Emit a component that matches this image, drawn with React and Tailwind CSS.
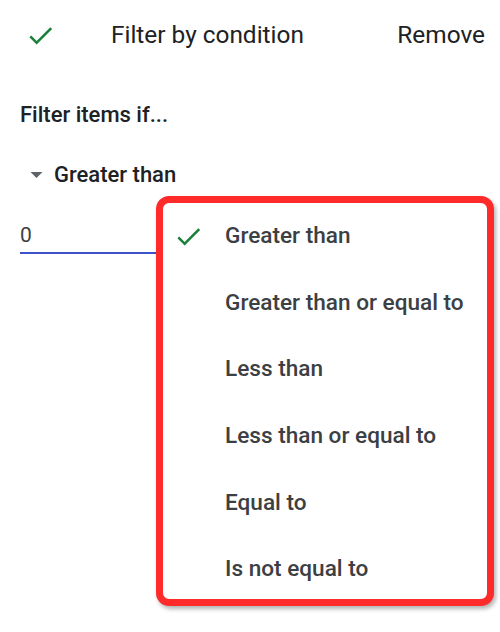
import React from 'react';

const options = [
  "Greater than",
  "Greater than or equal to",
  "Less than",
  "Less than or equal to",
  "Equal to",
  "Is not equal to",
];

function Check({ className }) {
  return (
    <svg viewBox="0 0 24 24" className={className}>
      <path d="M9 16.17L4.83 12l-1.42 1.41L9 19 21 7l-1.41-1.41z" fill="#188038" />
    </svg>
  );
}

export default function App() {
  const selected = "Greater than";

  return (
    <div className="relative w-[500px] h-[632px] bg-white overflow-hidden font-['Roboto',sans-serif] text-[#202124]">
      {/* top bar */}
      <div className="flex items-center h-[70px] pl-[25px] pr-[15px]">
        <Check className="w-[31px] h-[31px]" />
        <span className="ml-[55px] text-[24.4px] leading-[28px]">Filter by condition</span>
        <span className="ml-auto text-[24.4px] leading-[28px]">Remove</span>
      </div>

      <div className="px-[20px]">
        <div className="mt-[32px] text-[22px] leading-[26px] font-medium">Filter items if...</div>

        <div className="flex items-center mt-[34px] h-[26px] pl-[10px]">
          <svg viewBox="0 0 10 5" className="w-[13px] h-[6px]">
            <path d="M0 0h10L5 5z" fill="#5f6368" />
          </svg>
          <span className="ml-[11px] text-[22px] leading-[26px] font-medium">Greater than</span>
        </div>

        <div className="mt-[35px] w-[200px] border-b-2 border-[#3f51c8] pb-[5px] text-[21px] leading-[24px] text-[#3c4043]">0</div>
      </div>

      {/* dropdown menu */}
      <div className="absolute left-[156px] top-[196px] w-[338px] h-[410px] rounded-[13px] border-[7px] border-[#ff2a2a] bg-white overflow-hidden shadow-[2px_3px_4px_rgba(0,0,0,0.3)]">
        <ul>
          {options.map((opt) => (
            <li key={opt} className="flex items-center h-[66.6px]">
              <div className="w-[62px] pl-[10px] flex items-center">
                {opt === selected && <Check className="w-[31px] h-[31px]" />}
              </div>
              <span className="text-[22.6px] leading-[26px] font-medium text-[#3c4043]">{opt}</span>
            </li>
          ))}
        </ul>
      </div>
    </div>
  );
}
